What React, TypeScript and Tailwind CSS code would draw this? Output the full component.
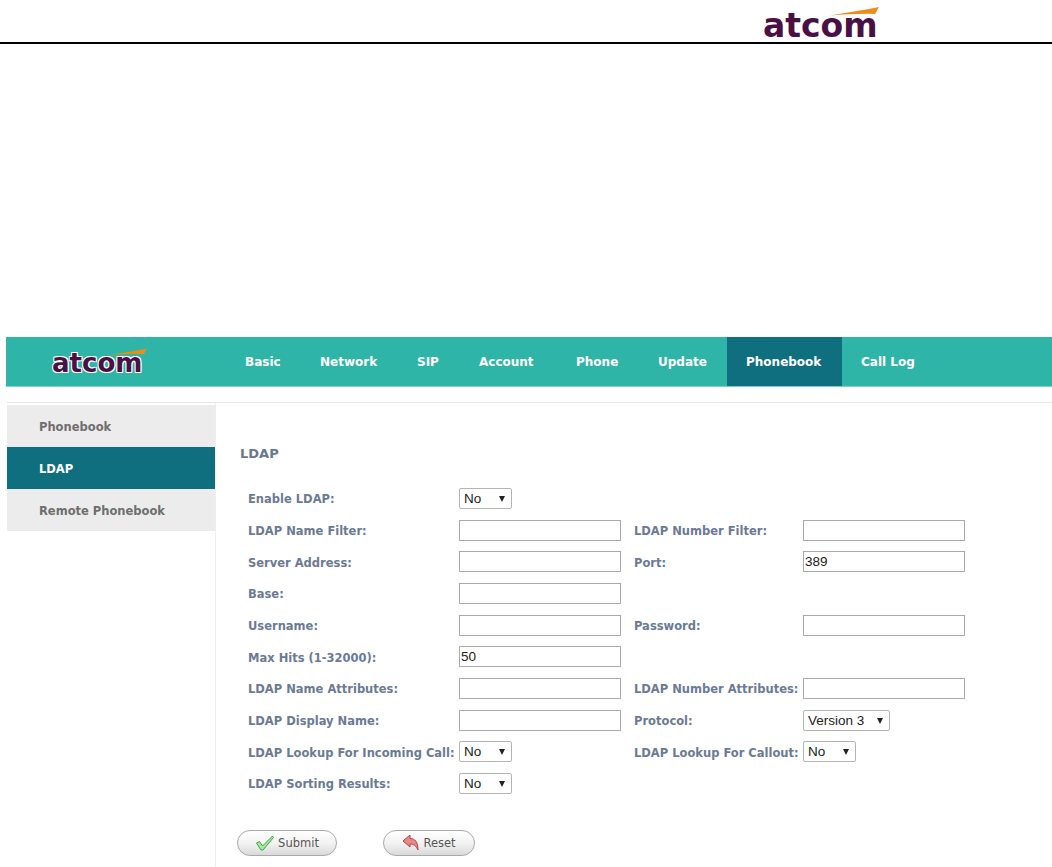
import React from "react"

const navItems = [
  { name: "Basic", width: "w-[75px]" },
  { name: "Network", width: "w-[97px]" },
  { name: "SIP", width: "w-[62px]" },
  { name: "Account", width: "w-[97px]" },
  { name: "Phone", width: "w-[82px]" },
  { name: "Update", width: "w-[88px]" },
  { name: "Phonebook", width: "w-[115px]" },
  { name: "Call Log", width: "w-[90px]" },
]
const sideItems = ["Phonebook", "LDAP", "Remote Phonebook"]

function Logo({ outlined }: { outlined?: boolean }) {
  return (
    <div className={outlined ? "relative w-[96px] h-[32px]" : "relative w-[120px] h-[36px]"}>
      <span
        className={
          outlined
            ? "absolute left-0 top-[2px] font-['DejaVu_Sans',sans-serif] font-bold text-[26px] leading-[30px] text-[#4a1045] [text-shadow:1px_1px_0_#fff,-1px_-1px_0_#fff,1px_-1px_0_#fff,-1px_1px_0_#fff]"
            : "absolute left-[3px] top-[2px] font-['DejaVu_Sans',sans-serif] font-bold text-[33px] leading-[36px] text-[#4a1045]"
        }
      >
        atcom
      </span>
      <svg className="absolute left-0 top-0 w-full h-full" viewBox="0 0 120 36">
        <path d="M70 9.5 C 88 6.5, 104 4, 119 1 L 115 8 C 100 7.5, 84 8.5, 70 9.5 Z" fill="#ef8a1d" />
      </svg>
    </div>
  )
}

function Label({ children, w }: { children: React.ReactNode; w: string }) {
  return <div className={`${w} shrink-0 whitespace-nowrap pt-[3px] text-[11.5px] font-bold text-[#6b7a94]`}>{children}</div>
}

function TextBox({ value }: { value?: string }) {
  return (
    <input
      type="text"
      defaultValue={value}
      className="w-[162px] h-[21px] border border-[#aaaaaa] bg-white px-[1px] text-[13.5px] text-[#222] font-['Liberation_Sans',sans-serif] outline-none"
    />
  )
}

function Select({ value, w }: { value: string; w: string }) {
  return (
    <div className={`relative ${w} h-[21px]`}>
      <select
        defaultValue={value}
        className="block w-full h-full appearance-none rounded-[2px] border border-[#b4b4b4] bg-white pl-[4px] text-[13.5px] text-[#222] font-['Liberation_Sans',sans-serif] outline-none"
      >
        <option>{value}</option>
      </select>
      <span className="absolute right-[7px] top-[8px] w-0 h-0 border-x-[3.5px] border-x-transparent border-t-[6px] border-t-[#222]" />
    </div>
  )
}

function Row({ children }: { children: React.ReactNode }) {
  return <div className="flex items-center h-[31.7px]">{children}</div>
}

function PillButton({ w, children }: { w: string; children: React.ReactNode }) {
  return (
    <button
      type="button"
      className={`${w} h-[26px] flex items-center justify-center gap-[3px] rounded-full border border-[#a9a9a9] bg-gradient-to-b from-white via-[#f3f3f3] to-[#d9d9d9] text-[11.5px] text-[#555]`}
    >
      {children}
    </button>
  )
}

export default function App() {
  return (
    <div className="w-[1052px] h-[867px] overflow-hidden bg-white font-['DejaVu_Sans',sans-serif]">
      <div className="h-[44px] border-b-2 border-black flex justify-end items-start pr-[172px] pt-[6px]">
        <Logo />
      </div>

      <div className="mt-[293px] ml-[6px] h-[50px] bg-[#2eb5a8] border-b border-[#7fd0c8] flex items-stretch">
        <div className="w-[220px] pl-[46px] pt-[9px]">
          <Logo outlined />
        </div>
        <div className="flex items-stretch text-[12px] font-bold text-white">
          {navItems.map((item) => (
            <div
              key={item.name}
              className={
                item.name === "Phonebook"
                  ? `${item.width} pl-[19px] flex items-center whitespace-nowrap bg-[#0f6f7f]`
                  : `${item.width} pl-[19px] flex items-center whitespace-nowrap`
              }
            >
              {item.name}
            </div>
          ))}
        </div>
      </div>

      <div className="mt-[15px] ml-[7px] border-t border-[#e8e8e8] flex">
        <div className="w-[208px] mt-[2px] shrink-0 text-[11.5px] font-bold">
          {sideItems.map((item) => (
            <div
              key={item}
              className={
                item === "LDAP"
                  ? "h-[42px] pl-[32px] pt-[3px] flex items-center bg-[#0f6f7f] text-white"
                  : "h-[42px] pl-[32px] pt-[3px] flex items-center bg-[#ececec] text-[#6e6e6e]"
              }
            >
              {item}
            </div>
          ))}
        </div>

        <div className="flex-1 border-l border-[#eeeeee] pl-[24px] pb-[11px]">
          <div className="mt-[41px] text-[13px] font-bold text-[#66788f]">LDAP</div>

          <div className="mt-[19px] pl-[8px]">
            <Row>
              <Label w="w-[211px]">Enable LDAP:</Label>
              <Select value="No" w="w-[53px]" />
            </Row>
            <Row>
              <Label w="w-[211px]">LDAP Name Filter:</Label>
              <TextBox />
              <div className="w-[13px]" />
              <Label w="w-[169px]">LDAP Number Filter:</Label>
              <TextBox />
            </Row>
            <Row>
              <Label w="w-[211px]">Server Address:</Label>
              <TextBox />
              <div className="w-[13px]" />
              <Label w="w-[169px]">Port:</Label>
              <TextBox value="389" />
            </Row>
            <Row>
              <Label w="w-[211px]">Base:</Label>
              <TextBox />
            </Row>
            <Row>
              <Label w="w-[211px]">Username:</Label>
              <TextBox />
              <div className="w-[13px]" />
              <Label w="w-[169px]">Password:</Label>
              <TextBox />
            </Row>
            <Row>
              <Label w="w-[211px]">Max Hits (1-32000):</Label>
              <TextBox value="50" />
            </Row>
            <Row>
              <Label w="w-[211px]">LDAP Name Attributes:</Label>
              <TextBox />
              <div className="w-[13px]" />
              <Label w="w-[169px]">LDAP Number Attributes:</Label>
              <TextBox />
            </Row>
            <Row>
              <Label w="w-[211px]">LDAP Display Name:</Label>
              <TextBox />
              <div className="w-[13px]" />
              <Label w="w-[169px]">Protocol:</Label>
              <Select value="Version 3" w="w-[87px]" />
            </Row>
            <Row>
              <Label w="w-[211px]">LDAP Lookup For Incoming Call:</Label>
              <Select value="No" w="w-[53px]" />
              <div className="w-[122px]" />
              <Label w="w-[169px]">LDAP Lookup For Callout:</Label>
              <Select value="No" w="w-[53px]" />
            </Row>
            <Row>
              <Label w="w-[211px]">LDAP Sorting Results:</Label>
              <Select value="No" w="w-[53px]" />
            </Row>
          </div>

          <div className="mt-[31px] -ml-[3px] flex gap-[46px]">
            <PillButton w="w-[100px]">
              <svg width="20" height="18" viewBox="0 0 20 18">
                <path d="M1.5 9 L4.5 7.5 L7.5 12 L17.5 2 L18.5 3.5 L8 16 L6 16 Z" fill="#a7e89a" stroke="#3fa34d" strokeWidth="1" strokeLinejoin="round" />
              </svg>
              <span>Submit</span>
            </PillButton>
            <PillButton w="w-[92px]">
              <svg width="18" height="18" viewBox="0 0 18 18">
                <path d="M1 7 L8 1 L8 4.5 C13 4.5 16 8 16 16 C14 12 12 10 8 10 L8 13 Z" fill="#e58a8a" stroke="#b8403f" strokeWidth="1" strokeLinejoin="round" />
              </svg>
              <span>Reset</span>
            </PillButton>
          </div>
        </div>
      </div>
    </div>
  )
}
